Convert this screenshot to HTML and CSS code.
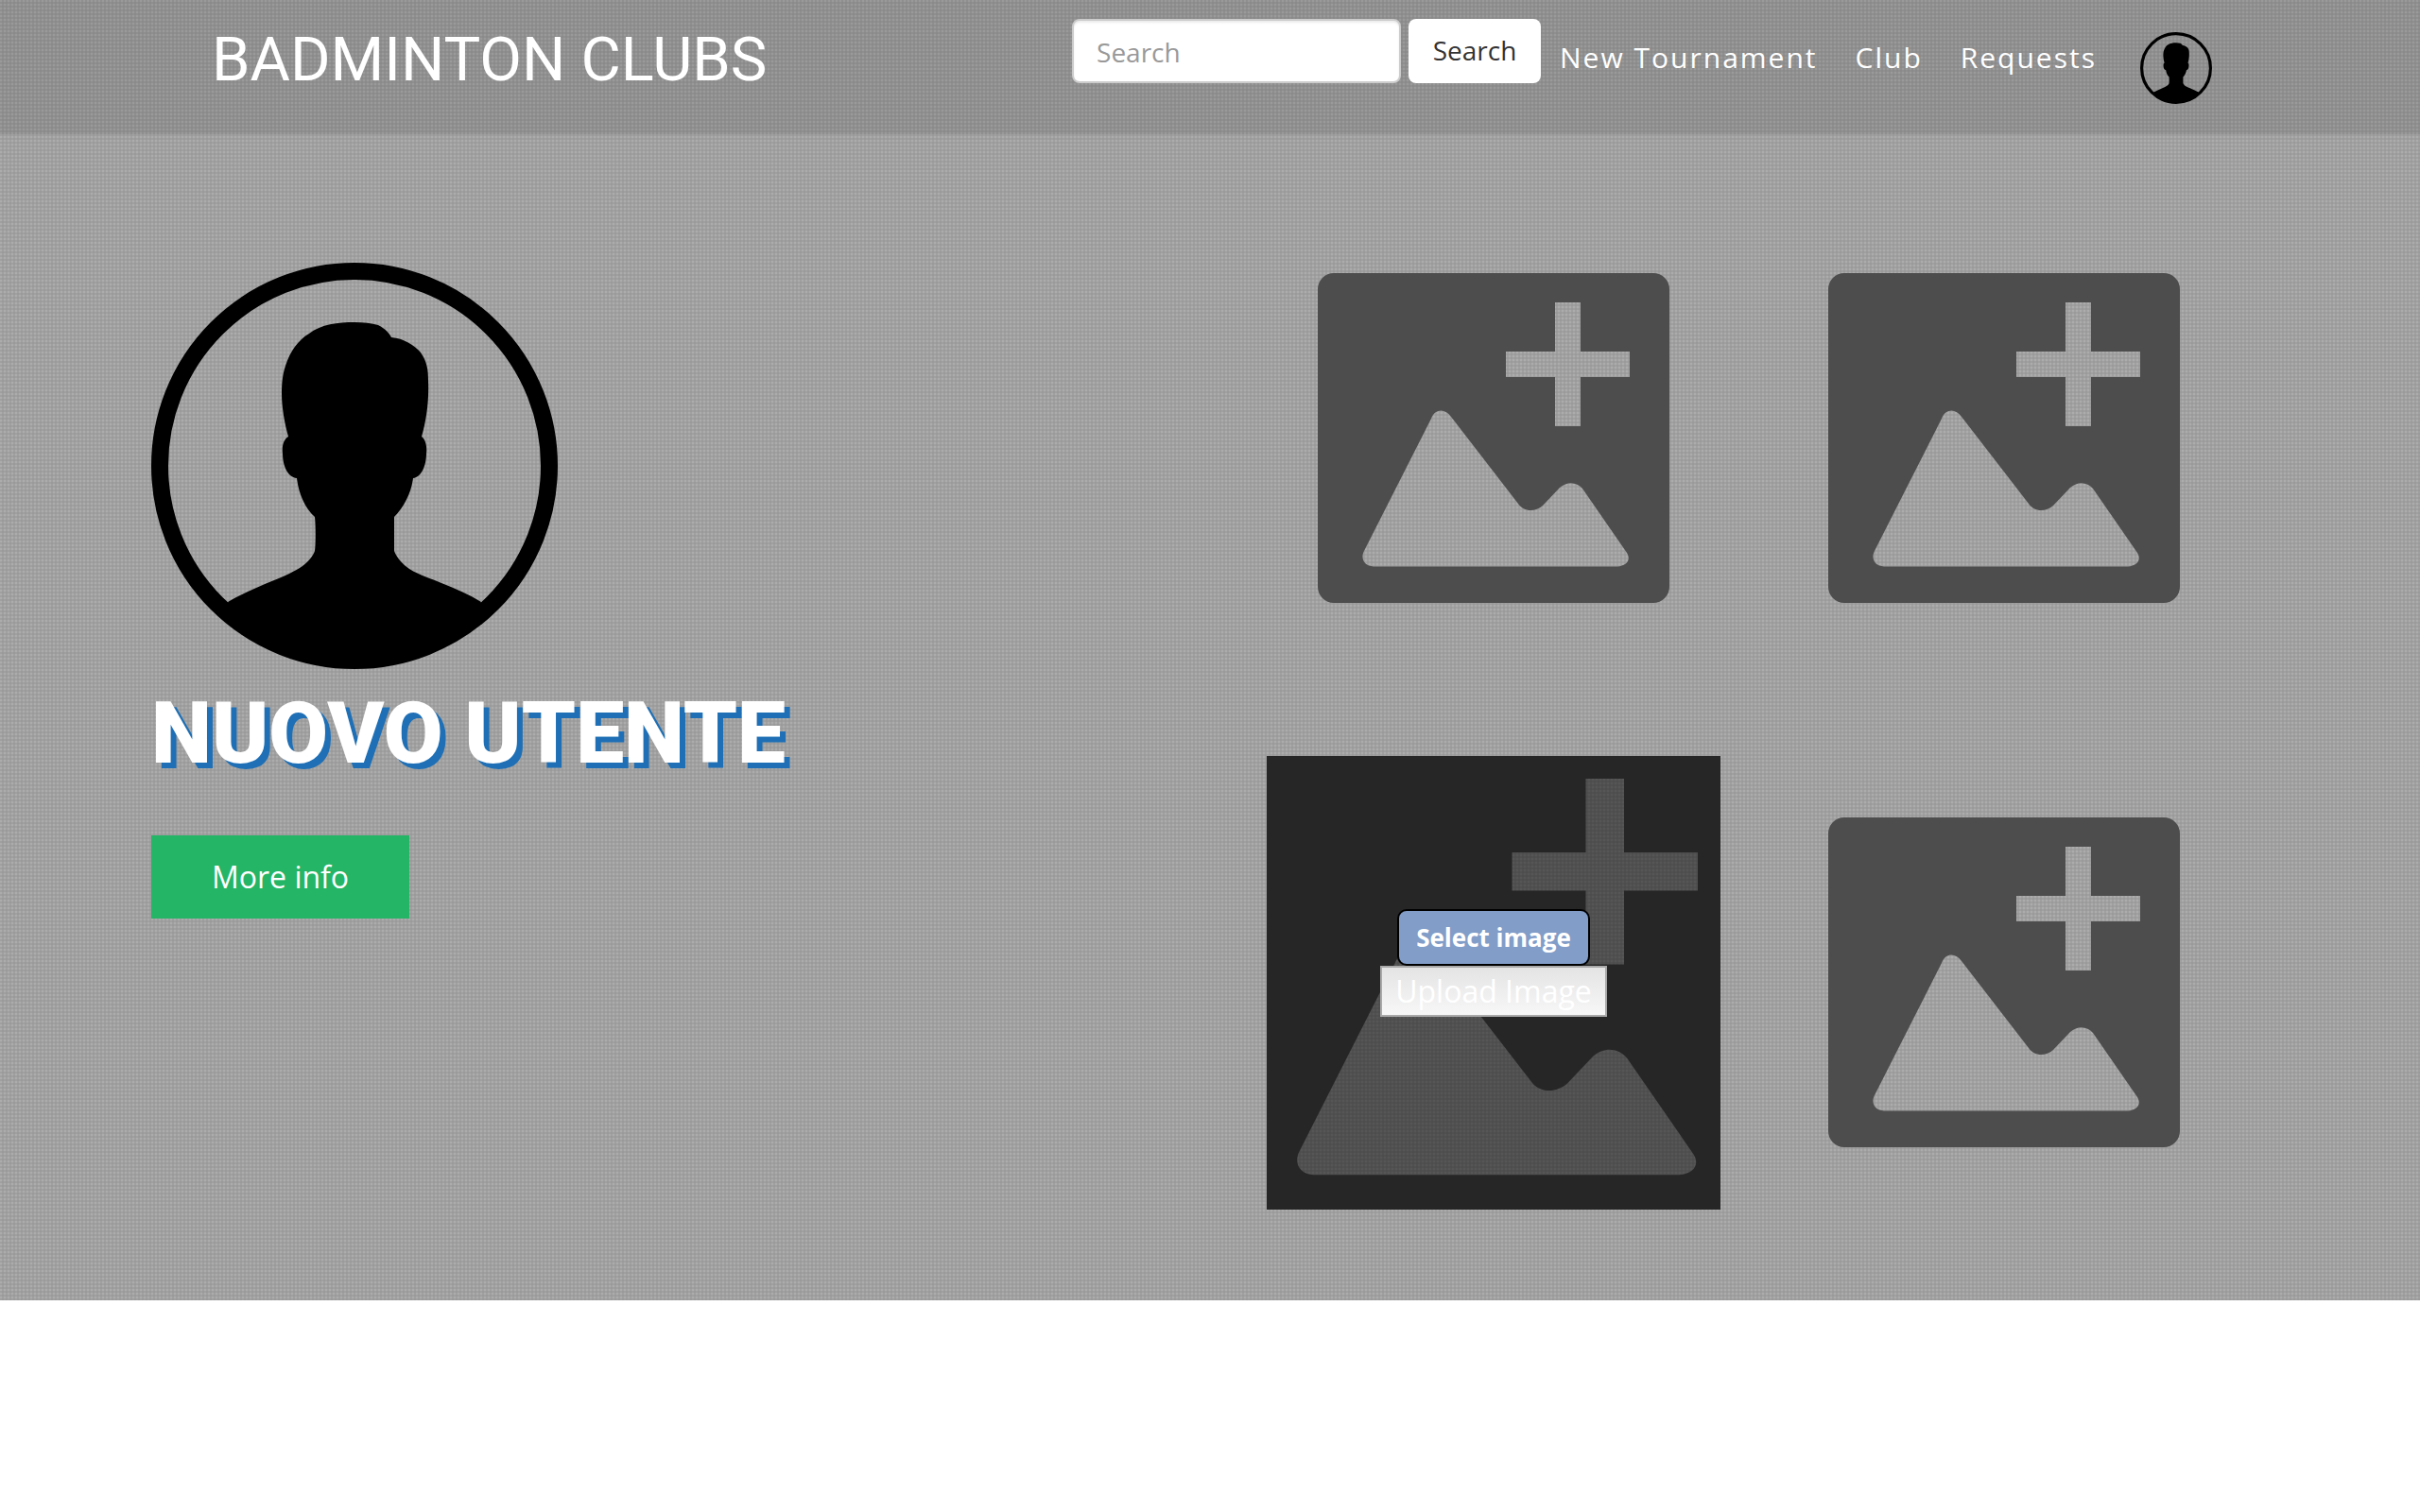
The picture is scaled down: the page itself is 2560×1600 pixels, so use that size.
FILE: index.html
```html
<!DOCTYPE html>
<html lang="it">
<head>
<meta charset="utf-8">
<meta name="viewport" content="width=device-width, initial-scale=1">
<title>Badminton Clubs</title>
<link rel="stylesheet" href="styles.css">
</head>
<body>
<svg class="symbols" aria-hidden="true">
  <symbol id="person" viewBox="0 0 430 430">
    <circle cx="215" cy="215" r="206" fill="none" stroke="#000" stroke-width="18"/>
    <path d="M81 359C97 350 113 343 130 336C142 331 151 327 160 321C167 316 171 310 173 305C174 297 174 279 173 269C162 259 156 244 154 228C144 227 139 214 139 202C138 194 140 187 145 184C141 170 138 152 138 139C138 127 139 118 142 109C147 94 155 82 167 75C180 65 197 63 215 63C225 63 233 64 240 66C248 70 252 75 254 79C267 80 278 87 285 95C292 105 293 114 293 125C294 146 291 167 286 184C290 187 292 194 291 202C291 214 286 227 277 228C275 244 267 259 257 269V305C260 313 267 320 273 324C284 331 296 334 307 339C322 345 336 351 349 359L344 375A206 206 0 0 1 86 375Z"/>
  </symbol>
  <symbol id="add-picture" viewBox="0 0 480 480" preserveAspectRatio="xMidYMid slice">
    <path fill="#4d4d4d" fill-rule="evenodd" d="M71 65H409A17 17 0 0 1 426 82V397A17 17 0 0 1 409 414H71A17 17 0 0 1 54 397V82A17 17 0 0 1 71 65ZM305 96V148H253V175H305V227H332V175H384V148H332V96ZM103 359L174 219C178 208 189 208 195 217L266 309C272 318 284 318 292 311L310 292C318 285 328 286 334 293L381 361C386 369 380 375 371 375.500H113C103 375 99 367 103 359Z"/>
  </symbol>
</svg>
<section class="hero">
  <header class="topbar">
    <a class="brand" href="#">BADMINTON CLUBS</a>
    <div class="topbar-tools">
      <form class="search">
        <input class="search-input" type="search" placeholder="Search" aria-label="Search">
        <button class="search-button" type="button">Search</button>
      </form>
      <nav class="links">
        <a href="#">New Tournament</a>
        <a href="#">Club</a>
        <a href="#">Requests</a>
      </nav>
      <a class="account" href="#" aria-label="Profile"><svg class="account-icon"><use href="#person"/></svg></a>
    </div>
  </header>
  <main class="profile">
    <div class="user">
      <svg class="portrait"><use href="#person"/></svg>
      <h1 class="user-name">NUOVO UTENTE</h1>
      <a class="more" href="#">More info</a>
    </div>
    <div class="gallery">
      <div class="slot"><svg class="picture"><use href="#add-picture"/></svg></div>
      <div class="slot"><svg class="picture"><use href="#add-picture"/></svg></div>
      <div class="slot slot-active">
        <svg class="picture" viewBox="80 80 320 320"><use href="#add-picture" width="480" height="480"/></svg>
        <form class="upload">
          <button class="select-button" type="button">Select image</button>
          <button class="upload-button" type="button">Upload Image</button>
        </form>
      </div>
      <div class="slot"><svg class="picture"><use href="#add-picture"/></svg></div>
    </div>
  </main>
</section>
</body>
</html>
```
FILE: styles.css
```css
* { box-sizing: border-box; }
body { margin: 0; background: #fff; font-family: "Open Sans", sans-serif; font-size: 28px; }
a { color: #fff; text-decoration: none; }
button, input { font-family: inherit; margin: 0; }
.symbols { position: absolute; width: 0; height: 0; }
.hero {
  padding-bottom: 96px;
  background-color: #9c9c9c;
  background-image:
    conic-gradient(from 0deg at 2px 2px, #a0a0a0 90deg, #9a9a9a 90deg 180deg, #a0a0a0 180deg 270deg, #acacac 270deg);
  background-size: 4px 4px;
}
.topbar {
  display: flex;
  justify-content: space-between;
  align-items: flex-start;
  height: 142px;
  padding: 20px 220px 0 224px;
  background: rgba(0, 0, 0, 0.1);
}
.brand { font-family: Roboto, sans-serif; font-size: 65px; line-height: 86px; }
.topbar-tools { display: flex; align-items: flex-start; }
.search { display: flex; gap: 8px; }
.search-input {
  width: 348px;
  height: 68px;
  padding: 2px 24px 0;
  border: 2px solid #ccc;
  border-radius: 8px;
  background: #fff;
  box-shadow: inset 0 2px 2px rgba(0, 0, 0, 0.08);
  font-size: 28px;
}
.search-input::placeholder { color: #999; }
.search-button {
  width: 140px;
  height: 68px;
  padding: 0 0 2px;
  border: 0;
  border-radius: 8px;
  background: #fff;
  color: #333;
  font-size: 28px;
}
.links { display: flex; gap: 40px; padding: 20px 46px 0 20px; }
.links a { font-size: 30px; line-height: 42px; font-weight: 500; letter-spacing: 2px; }
.account { padding-top: 14px; }
.account-icon { display: block; width: 76px; height: 76px; }
.profile { display: flex; justify-content: space-between; padding: 82px 200px 0 160px; }
.user { padding-top: 54px; }
.portrait { display: block; width: 430px; height: 430px; }
.user-name {
  margin: 18px 0 58px;
  color: #fff;
  font-family: Roboto, sans-serif;
  font-size: 91px;
  font-weight: 900;
  line-height: 100px;
  text-shadow: 6px 6px 0 #1e6fb5;
}
.more {
  display: inline-block;
  padding: 22px 64px;
  background: #24b566;
  font-size: 32px;
  line-height: 44px;
}
.gallery { display: grid; grid-template-columns: 480px 480px; gap: 96px 60px; }
.slot { position: relative; height: 480px; }
.picture { display: block; width: 100%; height: 100%; }
.slot-active::after { content: ""; position: absolute; inset: 0; background: rgba(0, 0, 0, 0.5); }
.upload {
  position: absolute;
  inset: 162px 0 auto;
  z-index: 1;
  display: flex;
  flex-direction: column;
  align-items: center;
}
.select-button {
  width: 204px;
  height: 60px;
  padding: 0;
  border: 2px solid #000;
  border-radius: 10px;
  background: #819dc8;
  color: #fff;
  font-size: 26px;
  font-weight: 700;
}
.upload-button {
  width: 240px;
  height: 54px;
  padding: 0;
  border: 2px solid #a9a9a9;
  background: linear-gradient(#e4e4e4, #f7f7f7);
  color: #fff;
  font-size: 32px;
  line-height: 44px;
}
```
